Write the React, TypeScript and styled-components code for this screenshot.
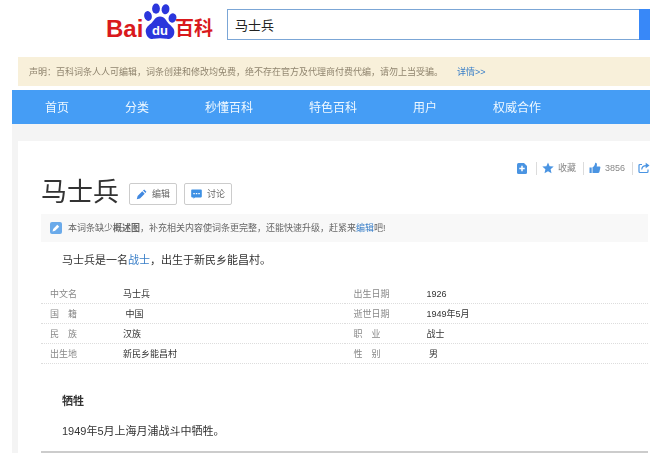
import React from "react";
import styled, { createGlobalStyle } from "styled-components";

const GlobalStyle = createGlobalStyle`
  * { box-sizing: border-box; }
  body {
    margin: 0;
    background: #fff;
    color: #333;
    font: 9px/20px "Liberation Sans", "Noto Sans CJK SC", sans-serif;
  }
  a { color: #3a7fc8; text-decoration: none; }
  svg { display: block; flex: none; }
`;

const Page = styled.div`
  padding: 0 20px 8px 12px;
  overflow: hidden;
`;

const Header = styled.header`
  display: flex;
  align-items: flex-start;
  height: 57px;
  padding-left: 93px;
`;

const SearchForm = styled.form`
  display: flex;
  flex: 1;
  height: 31px;
  margin: 9px 0 0 12px;
`;

const SearchInput = styled.input`
  flex: 1;
  min-width: 0;
  padding: 0 7px;
  border: 1px solid #7ba6d6;
  border-right: 0;
  border-radius: 0;
  outline: 0;
  background: #fff;
  color: #222;
  caret-color: #222;
  font: 13px "Liberation Sans", "Noto Sans CJK SC", sans-serif;
`;

const SearchButton = styled.button`
  width: 11px;
  padding: 0;
  border: 0;
  background: #3888f8;
`;

const Notice = styled.p`
  display: flex;
  align-items: center;
  gap: 14px;
  height: 29px;
  margin: 0 0 4px 6px;
  padding-left: 11px;
  background: #f8f0da;
  color: #8f846e;
  white-space: nowrap;
`;

const Nav = styled.nav`
  display: flex;
  align-items: center;
  gap: 56px;
  height: 34px;
  padding: 1px 0 0 33px;
  background: #459df5;
  white-space: nowrap;
`;

const NavLink = styled.a`
  color: #eef8ff;
  font-size: 12px;
`;

const Body = styled.div`
  padding: 17px 0 0 6px;
  background: #f4f4f4;
`;

const Article = styled.article`
  padding: 17px 0 0 23px;
  background: #fff;
`;

const Actions = styled.div`
  display: flex;
  justify-content: flex-end;
  height: 20px;
`;

const Action = styled.button`
  display: flex;
  align-items: center;
  gap: 4px;
  height: 20px;
  padding: 0 7px 0 6px;
  border: 0;
  background: linear-gradient(#dcdcdc, #dcdcdc) left center / 1px 13px no-repeat;
  color: #888;
  font: inherit;
  white-space: nowrap;
  &:first-child { background: none; padding-right: 9px; }
  &:last-child { padding-right: 0; }
`;

const TitleRow = styled.div`
  display: flex;
  align-items: center;
  gap: 7px;
  height: 36px;
  margin: -4px 2px 0 0;
`;

const Title = styled.h1`
  margin: 0 3px 0 0;
  color: #333;
  font-size: 26px;
  line-height: 34px;
  font-weight: 400;
`;

const PillButton = styled.button`
  display: flex;
  align-items: center;
  justify-content: center;
  gap: 5px;
  width: 48px;
  height: 22px;
  margin-top: 4px;
  padding: 0;
  border: 1px solid #ccc;
  border-radius: 2px;
  background: #fff;
  color: #666;
  font: inherit;
  white-space: nowrap;
`;

const Hint = styled.div`
  display: flex;
  align-items: center;
  gap: 6px;
  height: 28px;
  margin: 4px 2px 0 0;
  padding-left: 9px;
  background: #f8f8f8;
  color: #666;
  white-space: nowrap;
`;

const Paragraph = styled.p`
  margin: 0;
  padding: 8px 0 0 21px;
  font-size: 11px;
`;

const Facts = styled.dl`
  display: grid;
  grid-template-columns: 1fr 1fr;
  margin: 14px 2px 0 0;
`;

const Fact = styled.div`
  display: flex;
  height: 20px;
  padding-left: 9px;
  border-bottom: 1px dotted #ddd;
`;

const Term = styled.dt`
  width: 73px;
  color: #888;
  white-space: pre;
`;

const Value = styled.dd`
  margin: 0;
  white-space: pre;
`;

const SectionTitle = styled.h2`
  margin: 27px 0 2px;
  padding-left: 21px;
  font-size: 11px;
  line-height: 20px;
  font-weight: 700;
`;

const Rule = styled.hr`
  height: 2px;
  margin: 10px 2px 0 0;
  border: 0;
  background: #ccc;
`;

const Logo = () => (
  <svg width="110" height="44" viewBox="105 0 110 44" role="img" aria-label="Baidu百科">
    <g fill="#d9191d" fontWeight="700">
      <text x="106" y="37" fontSize="24" fontFamily="Liberation Sans, sans-serif">Bai</text>
      <text x="175" y="35" fontSize="19" fontFamily="Noto Sans CJK SC, sans-serif">百科</text>
    </g>
    <g fill="#2b36dc">
      <ellipse cx="148" cy="16" rx="3.8" ry="5" transform="rotate(-14 148 16)" />
      <ellipse cx="156" cy="8.7" rx="3.9" ry="5.1" />
      <ellipse cx="165.5" cy="9.2" rx="3.9" ry="5.1" transform="rotate(10 165.5 9.2)" />
      <ellipse cx="172.5" cy="18" rx="3.9" ry="4.8" transform="rotate(16 172.5 18)" />
      <path d="M160 16.500C155 16.500 154 21 151 23.500C147 26.500 145 29 146 33C147 38 150.500 39.500 154 38.800C158 38 162 38 166 38.800C170 39.500 173.500 38 174.300 33C175 28.500 171.500 26.500 168.500 23.500C166 20.500 165 16.500 160 16.500Z" />
    </g>
    <text x="152" y="35" fontSize="13" fontWeight="700" fontFamily="Liberation Sans, sans-serif" fill="#fff">du</text>
  </svg>
);

const AddIcon = () => (
  <svg width="10" height="11" viewBox="0 0 10 11">
    <path d="M1.500 0H7L10 3V9.500Q10 11 8.500 11H1.500Q0 11 0 9.500V1.500Q0 0 1.500 0Z" fill="#4a94e2" />
    <path d="M5 2.800V8.200M2.300 5.500H7.700" stroke="#fff" strokeWidth="1.500" />
  </svg>
);

const StarIcon = () => (
  <svg width="12" height="12" viewBox="0 0 12 12">
    <path d="M6 .4L7.600 4.200L11.700 4.500L8.600 7.200L9.500 11.300L6 9.200L2.500 11.300L3.400 7.200L.3 4.500L4.400 4.200Z" fill="#4a94e2" />
  </svg>
);

const ThumbIcon = () => (
  <svg width="12" height="12" viewBox="0 0 12 12">
    <path d="M.5 5.500H2.700V11H.5ZM3.500 5.300C5.500 4.200 6 2.500 6.200 .7C7.800 .5 8.400 2 7.700 4.400H10.500Q11.500 4.500 11.400 5.500L10.400 10Q10.100 11 9 11H3.500Z" fill="#4a94e2" />
  </svg>
);

const ShareIcon = () => (
  <svg width="12" height="12" viewBox="0 0 12 12">
    <path d="M4 2.500H2Q1 2.500 1 3.500V9.500Q1 10.500 2 10.500H9Q10 10.500 10 9.500V7.500M3.700 7.500Q4 3.600 8.500 3.600" fill="none" stroke="#4a94e2" strokeWidth="1.200" />
    <path d="M7.700 .8L11.500 3.600L7.700 6.300Z" fill="#4a94e2" />
  </svg>
);

const PencilIcon = () => (
  <svg width="11" height="11" viewBox="0 0 11 11">
    <path d="M.8 10.200L1.600 7L6.300 2.300L8.700 4.700L4 9.400ZM7 1.600L8.200 .6L10.400 2.800L9.400 4Z" fill="#4088e0" />
  </svg>
);

const ChatIcon = () => (
  <svg width="11" height="10" viewBox="0 0 11 10">
    <path d="M1 .5H10Q10.800 .5 10.800 1.300V7.600Q10.800 8.400 10 8.400H4L2.500 9.800V8.400H1Q.2 8.400 .2 7.600V1.300Q.2 .5 1 .5Z" fill="#3d90e4" />
    <path d="M2.300 4.600H3.800M4.800 4.600H6.300M7.300 4.600H8.800" stroke="#fff" strokeWidth="1.200" />
  </svg>
);

const HintIcon = () => (
  <svg width="12" height="12" viewBox="0 0 12 12">
    <rect width="12" height="12" rx="2" fill="#6aaaea" />
    <path d="M2.500 9.500L3.200 6.900L7.300 2.800L9.200 4.700L5.100 8.800Z" fill="#fff" />
  </svg>
);

const navItems = ["首页", "分类", "秒懂百科", "特色百科", "用户", "权威合作"];

const facts = [
  ["中文名", "马士兵"],
  ["出生日期", "1926"],
  ["国\u3000籍", " 中国"],
  ["逝世日期", "1949年5月"],
  ["民\u3000族", "汉族"],
  ["职\u3000业", "战士"],
  ["出生地", "新民乡能昌村"],
  ["性\u3000别", " 男"],
];

export default function App() {
  return (
    <Page>
      <GlobalStyle />
      <Header>
        <Logo />
        <SearchForm onSubmit={(e) => e.preventDefault()}>
          <SearchInput aria-label="搜索词条" defaultValue="马士兵" autoFocus />
          <SearchButton aria-label="搜索" />
        </SearchForm>
      </Header>
      <Notice>
        <span>声明：百科词条人人可编辑，词条创建和修改均免费，绝不存在官方及代理商付费代编，请勿上当受骗。</span>
        <a href="#details">详情&gt;&gt;</a>
      </Notice>
      <Nav>
        {navItems.map((item) => (
          <NavLink key={item} href="#nav">{item}</NavLink>
        ))}
      </Nav>
      <Body>
        <Article>
          <Actions>
            <Action aria-label="添加"><AddIcon /></Action>
            <Action><StarIcon />收藏</Action>
            <Action><ThumbIcon />3856</Action>
            <Action aria-label="分享"><ShareIcon /></Action>
          </Actions>
          <TitleRow>
            <Title>马士兵</Title>
            <PillButton><PencilIcon />编辑</PillButton>
            <PillButton><ChatIcon />讨论</PillButton>
          </TitleRow>
          <Hint>
            <HintIcon />
            <span>
              本词条缺少<b>概述图</b>，补充相关内容使词条更完整，还能快速升级，赶紧来<a href="#edit">编辑</a>吧!
            </span>
          </Hint>
          <Paragraph>
            马士兵是一名<a href="#soldier">战士</a>，出生于新民乡能昌村。
          </Paragraph>
          <Facts>
            {facts.map(([term, value]) => (
              <Fact key={term}>
                <Term>{term}</Term>
                <Value>{value}</Value>
              </Fact>
            ))}
          </Facts>
          <SectionTitle>牺牲</SectionTitle>
          <Paragraph>1949年5月上海月浦战斗中牺牲。</Paragraph>
          <Rule />
        </Article>
      </Body>
    </Page>
  );
}
